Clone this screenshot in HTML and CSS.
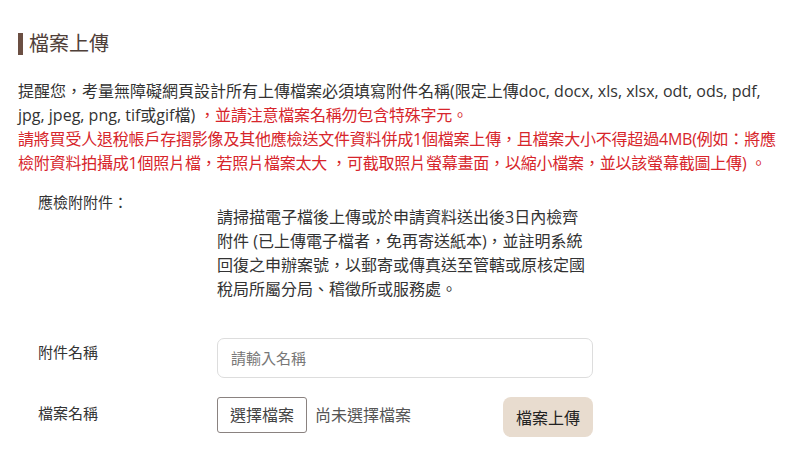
FILE: index.html
```html
<!DOCTYPE html>
<html lang="zh-Hant">
<head>
    <meta charset="UTF-8">
    <meta name="viewport" content="width=device-width, initial-scale=1.0">
    <title>檔案上傳</title>
    <link rel="stylesheet" href="styles.css">
</head>
<body>
    <div class="upload-container">
        <h2 class="upload-title">檔案上傳</h2>
        <p class="upload-notice">
            提醒您，考量無障礙網頁設計所有上傳檔案必須填寫附件名稱(限定上傳doc, docx, xls, xlsx, odt, ods, pdf,<br>
            jpg, jpeg, png, tif或gif檔) <span class="warn">，並請注意檔案名稱勿包含特殊字元。</span><br>
            <span class="warn">請將買受人退稅帳戶存摺影像及其他應檢送文件資料併成1個檔案上傳，且檔案大小不得超過4MB(例如：將應<br>
            檢附資料拍攝成1個照片檔，若照片檔案太大 ，可截取照片螢幕畫面，以縮小檔案，並以該螢幕截圖上傳) 。</span>
        </p>
        <form id="upload-form" class="upload-form">
            <div class="form-row">
                <label class="form-label">應檢附附件：</label>
                <div class="form-desc">請掃描電子檔後上傳或於申請資料送出後3日內檢齊附件 (已上傳電子檔者，免再寄送紙本)，並註明系統回復之申辦案號，以郵寄或傳真送至管轄或原核定國稅局所屬分局、稽徵所或服務處。</div>
            </div>
            <div class="form-row row-input">
                <label class="form-label" for="attach-name">附件名稱</label>
                <input type="text" id="attach-name" class="text-input" placeholder="請輸入名稱">
            </div>
            <div class="form-row row-file">
                <label class="form-label">檔案名稱</label>
                <div class="file-line">
                    <span class="file-btn">選擇檔案</span>
                    <span class="file-empty">尚未選擇檔案</span>
                    <button type="submit" class="upload-btn">檔案上傳</button>
                </div>
            </div>
        </form>
    </div>
</body>
</html>
```

FILE: styles.css
```css
body {
    font-family: "Open Sans", "Noto Sans CJK TC", sans-serif;
    background-color: #fff;
    color: #333;
    margin: 0;
}
.upload-container {
    padding: 33px 0 0 18px;
}
.upload-title {
    margin: 0;
    font-size: 20px;
    line-height: 22px;
    font-weight: normal;
    color: #4f4039;
    border-left: 5px solid #6b4f43;
    padding-left: 6px;
}
.upload-notice {
    margin: 24px 0 0;
    font-size: 16px;
    line-height: 24px;
    white-space: nowrap;
}
.upload-notice .warn {
    color: #d7252b;
    letter-spacing: -0.2px;
}
.upload-form {
    margin-top: 15px;
}
.form-row {
    display: grid;
    grid-template-columns: 179px 376px;
    padding-left: 20px;
}
.form-label {
    font-size: 15px;
    line-height: 24px;
    color: #333;
}
.form-desc {
    margin-top: 15px;
    font-size: 16px;
    line-height: 24px;
}
.row-input {
    margin-top: 37px;
}
.row-input .form-label {
    padding-top: 2px;
}
.text-input {
    box-sizing: border-box;
    width: 100%;
    height: 40px;
    border: 1px solid #ddd;
    border-radius: 7px;
    padding: 0 13px;
    font-family: inherit;
    font-size: 15px;
    color: #333;
}
.text-input::placeholder {
    color: #777;
}
.row-file {
    margin-top: 19px;
}
.row-file .form-label {
    padding-top: 4px;
}
.file-line {
    display: flex;
    align-items: flex-start;
}
.file-btn {
    box-sizing: border-box;
    height: 36px;
    width: 90px;
    border: 1px solid #8a8280;
    border-radius: 3px;
    font-size: 16px;
    line-height: 34px;
    text-align: center;
    color: #444;
}
.file-empty {
    margin-left: 8px;
    font-size: 16px;
    line-height: 36px;
    color: #555;
}
.upload-btn {
    margin-left: auto;
    width: 90px;
    height: 40px;
    border: none;
    border-radius: 8px;
    background-color: #e8dccf;
    font-family: inherit;
    font-size: 16px;
    color: #222;
    cursor: pointer;
}
.upload-btn:hover {
    background-color: #dccdbd;
}
```
